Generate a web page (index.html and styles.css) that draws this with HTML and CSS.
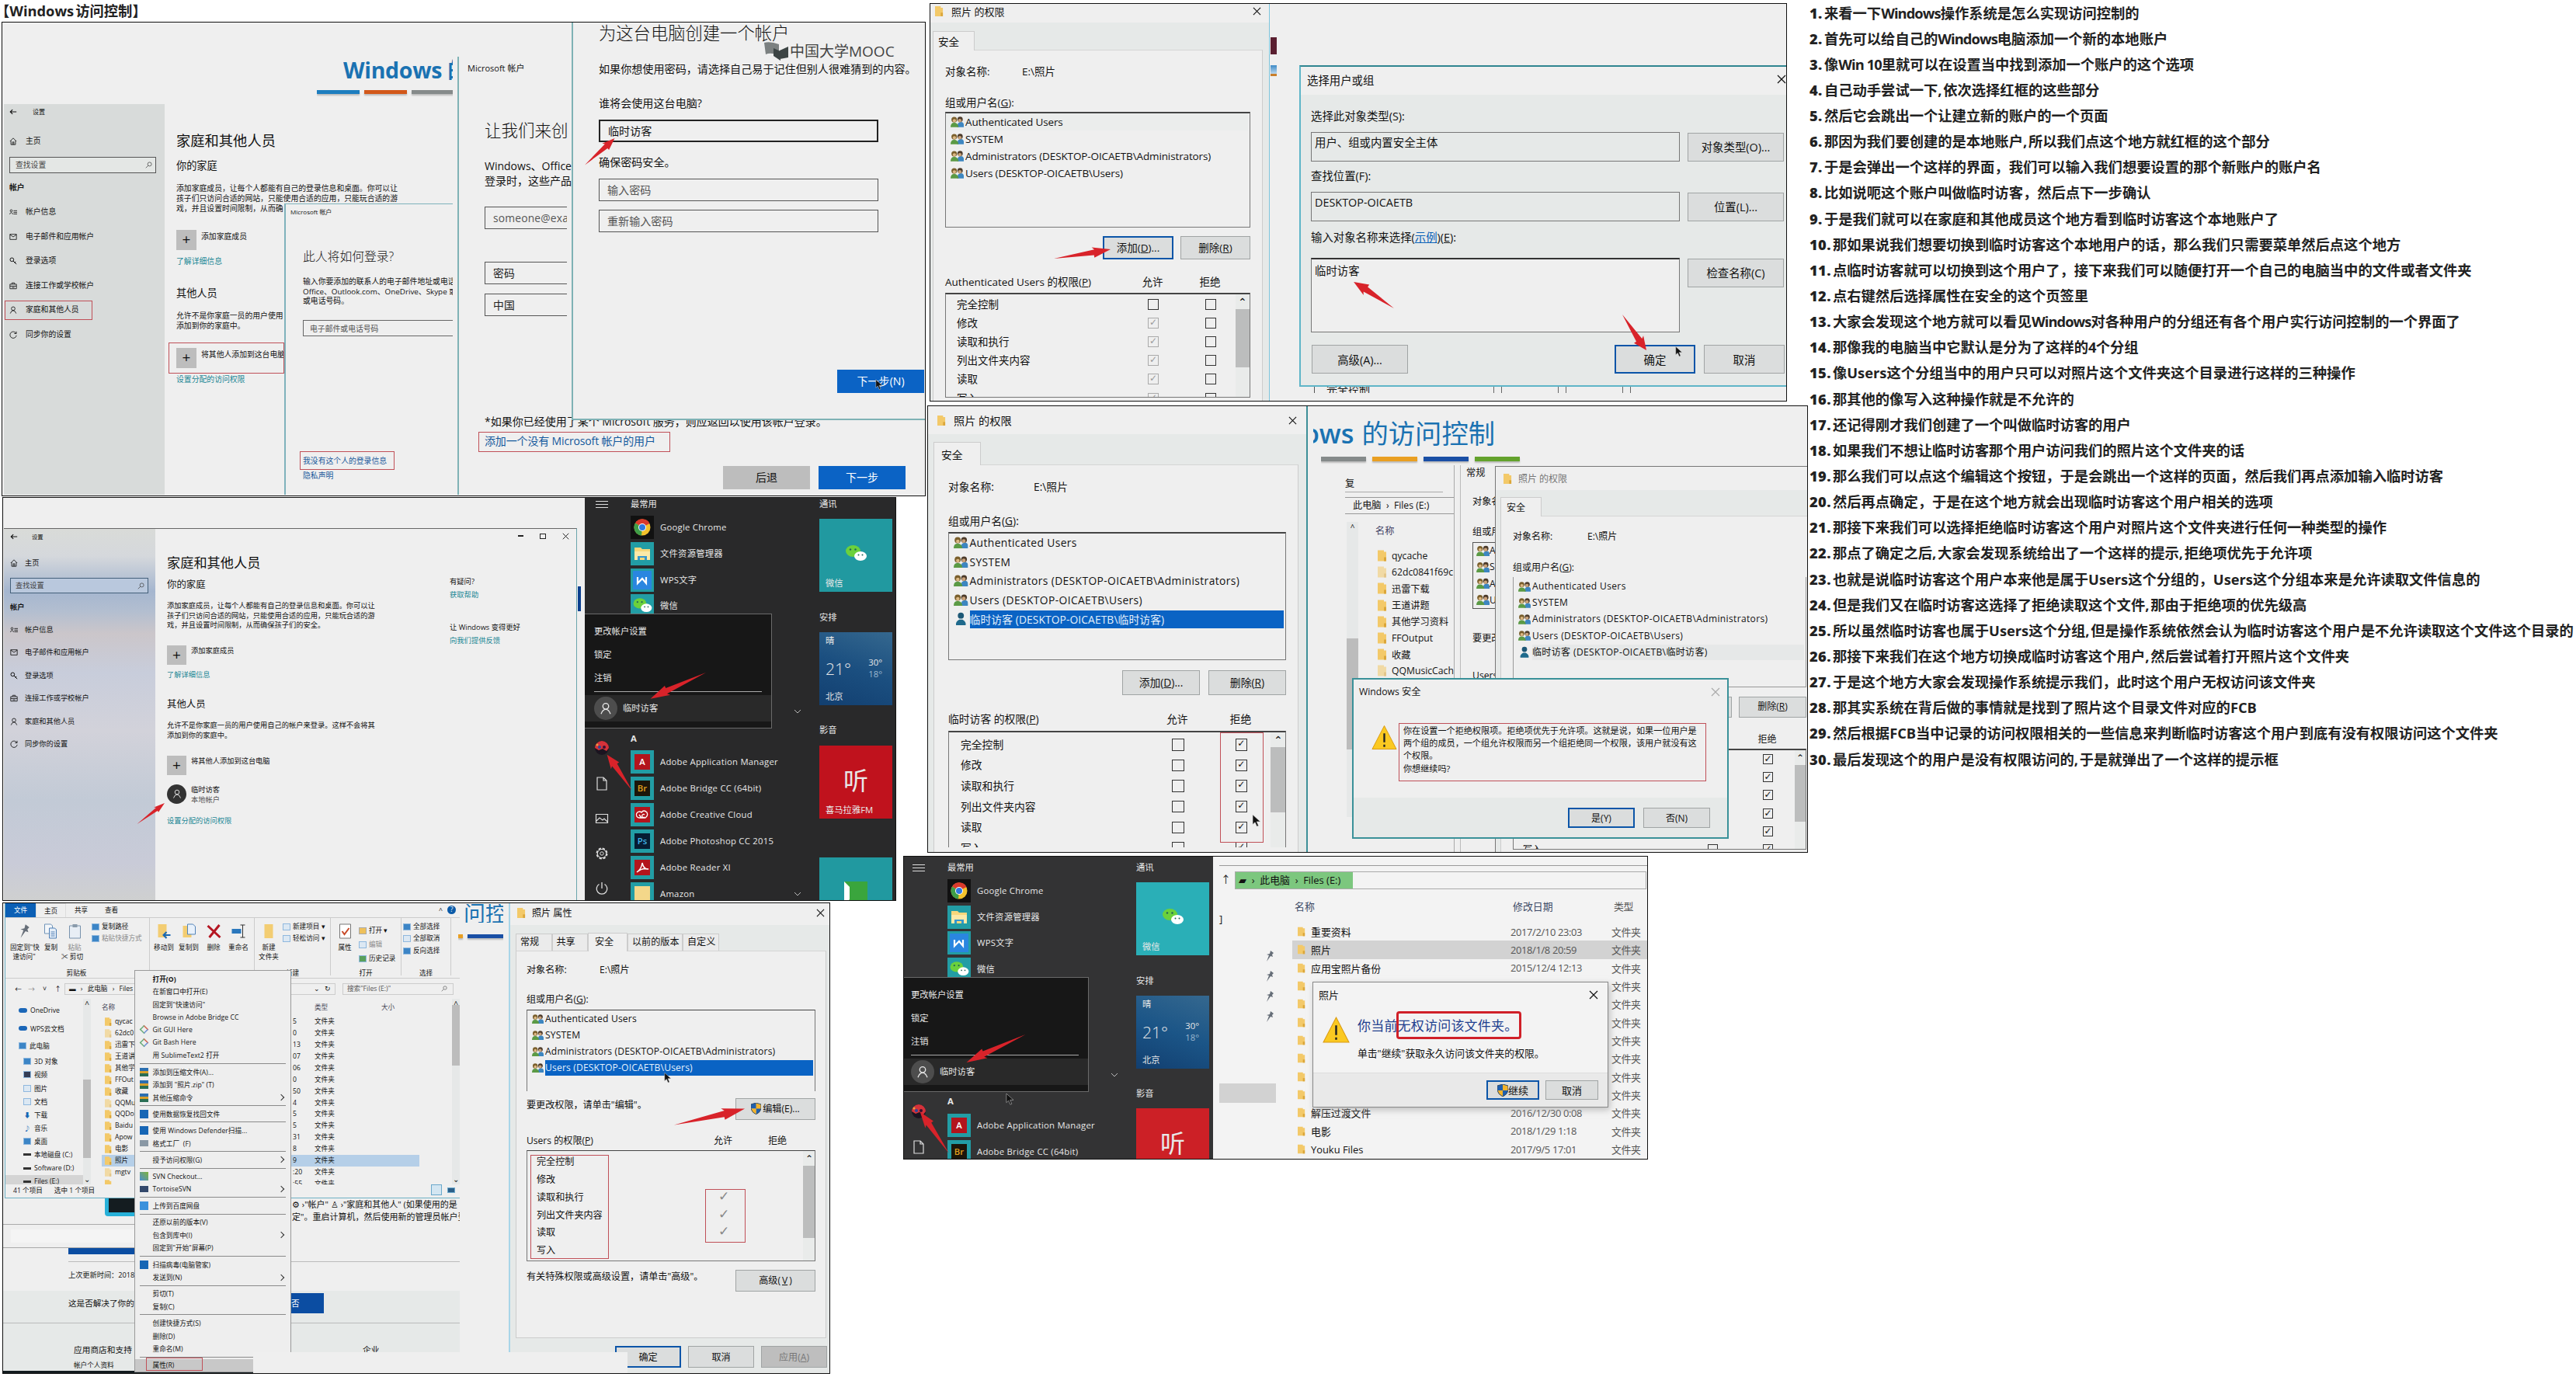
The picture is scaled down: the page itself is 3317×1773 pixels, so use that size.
FILE: index.html
```html
<!DOCTYPE html>
<html lang="zh-CN">
<head>
<meta charset="utf-8">
<title>Windows 访问控制</title>
<link rel="stylesheet" href="styles.css">
</head>
<body>
<svg width="0" height="0" class="defs">
  <symbol id="folder" viewBox="0 0 12 14"><path d="M0 0h8v2h3v12H0z" fill="#f3c969"/><path d="M8 9h3v5H8z" fill="#dba63a"/></symbol>
  <symbol id="users" viewBox="0 0 18 16"><path d="M9 15q0-7 5-7t4 7z" fill="#3d86c0"/><circle cx="13" cy="4.5" r="3.6" fill="#4b3a2a"/><circle cx="12.6" cy="6" r="2.4" fill="#c9a27a"/><path d="M0 15q0-6 5-6t6 6z" fill="#5b9a45"/><circle cx="5" cy="4.8" r="3.8" fill="#7a5f2c"/><circle cx="5.2" cy="6.2" r="2.2" fill="#dcb884"/></symbol>
  <symbol id="user" viewBox="0 0 18 16"><circle cx="9" cy="4" r="3.8" fill="#1d5876"/><path d="M3 16q-1-4 4-7h4q5 3 4 7z" fill="#1f6a8c"/></symbol>
  <symbol id="cursor" viewBox="0 0 12 18"><path d="M1 0v14l3.4-3 2.6 6 2.4-1-2.6-6H12z" fill="#111" stroke="#ddd" stroke-width=".6"/></symbol>
  <symbol id="x" viewBox="0 0 12 12"><path d="M1 1l10 10M11 1L1 11" stroke="currentColor" stroke-width="1.2"/></symbol>
  <symbol id="warn" viewBox="0 0 34 33"><path d="M17 1L33 32H1z" fill="#fbc921" stroke="#d99a12"/><path d="M17 11v12M17 26v3" stroke="#222" stroke-width="2.4"/></symbol>
  <symbol id="shield" viewBox="0 0 14 16"><path d="M7 0l7 2v6q-1 5-7 8V8H0V2z" fill="#f3b32a"/><path d="M7 0v8H0V2zM7 8h7q-1 5-7 8z" fill="#1f5fae"/><path d="M0 8h7v8Q1 13 0 8z" fill="#f3b32a"/><path d="M7 0l7 2v6q-1 5-7 8-6-3-7-8V2z" fill="none" stroke="#2c4a6c"/></symbol>
  <symbol id="home" viewBox="0 0 12 12"><path d="M1 6l5-5 5 5M2.5 5v6h7V5M5 11V7h2v4" fill="none" stroke="currentColor"/></symbol>
  <symbol id="back" viewBox="0 0 12 12"><path d="M11 6H1.5M5 2.500L1.500 6 5 9.500" fill="none" stroke="currentColor" stroke-width="1.300"/></symbol>
  <symbol id="idcard" viewBox="0 0 12 12"><circle cx="3" cy="4" r="1.600" fill="none" stroke="currentColor"/><path d="M.5 9.500Q3 4 5.500 9.500M6.500 4H12M6.500 6.500H12M6.500 9H12" fill="none" stroke="currentColor"/></symbol>
  <symbol id="mail" viewBox="0 0 12 12"><path d="M1 2h10v8H1zM1 2.500l5 3.500 5-3.500" fill="none" stroke="currentColor"/></symbol>
  <symbol id="key" viewBox="0 0 12 12"><circle cx="4" cy="4" r="2.800" fill="none" stroke="currentColor" stroke-width="1.200"/><path d="M6 6l5 5M8 8.500l2-1" fill="none" stroke="currentColor" stroke-width="1.200"/></symbol>
  <symbol id="case" viewBox="0 0 12 12"><path d="M1 3.500h10v7H1zM4 3.500v-2h4v2M1 6.500h10M4 8.500h4" fill="none" stroke="currentColor"/></symbol>
  <symbol id="person" viewBox="0 0 12 12"><circle cx="6" cy="4" r="2.800" fill="none" stroke="currentColor"/><path d="M1.500 11.500Q3 7 6 7t4.500 4.500" fill="none" stroke="currentColor"/></symbol>
  <symbol id="sync" viewBox="0 0 12 12"><path d="M10.500 4A5 5 0 1 0 11 7M10.800 1v3.200H7.600" fill="none" stroke="currentColor"/></symbol>
  <symbol id="search" viewBox="0 0 12 12"><circle cx="7.500" cy="4.500" r="3.300" fill="none" stroke="currentColor"/><path d="M5 7L1 11" stroke="currentColor"/></symbol>
  <symbol id="chrome" viewBox="0 0 30 30"><path d="M0 0h30v30H0z" fill="#111"/><circle cx="15" cy="15" r="10.500" fill="#f2c22c"/><path d="M15 15L6 9.500A10.500 10.500 0 0 1 24.500 10z" fill="#d93a2c"/><path d="M15 15L6 9.500A10.500 10.500 0 0 0 14 25.500z" fill="#3f9e48"/><circle cx="15" cy="15" r="5" fill="#fff"/><circle cx="15" cy="15" r="4" fill="#2f79e0"/></symbol>
  <symbol id="expl" viewBox="0 0 30 30"><path d="M5 7h8l2 2h10v14H5z" fill="#f6d77c"/><path d="M5 12h20v11h-4v-5H9v5H5z" fill="#fbe9a8"/><path d="M9 18h12v5h-3v-3h-6v3H9z" fill="#3597cf"/></symbol>
  <symbol id="wps" viewBox="0 0 30 30"><path d="M3 3h24v24H3z" fill="#2a86e0"/><path d="M9 11v8l6-6 5 6v-8" fill="none" stroke="#fff" stroke-width="2.200"/></symbol>
  <symbol id="wechat" viewBox="-2 -1 34 31"><ellipse cx="11.500" cy="11" rx="9.500" ry="7.500" fill="#6bd13c"/><ellipse cx="21" cy="17.500" rx="8" ry="6" fill="#fff"/><g fill="#265"><circle cx="8" cy="9" r="1.200"/><circle cx="14.500" cy="9" r="1.200"/><circle cx="18.500" cy="16" r="1"/><circle cx="23.500" cy="16" r="1"/></g></symbol>
  <symbol id="acro" viewBox="0 0 20 20"><path d="M3 16Q9 12 10 4q2 9 8 8-8-2-15 4" fill="none" stroke="#fff" stroke-width="1.500"/></symbol>
  <symbol id="cloud" viewBox="0 0 20 20"><path d="M6 14a4 4 0 1 1 3-7q3-4 7 0 2 4-2 7zM9 14l-3-4M13 10a2 2 0 1 0 0 3" fill="none" stroke="#fff" stroke-width="1.300"/></symbol>
  <symbol id="gear" viewBox="0 0 20 20"><circle cx="10" cy="10" r="6.500" fill="none" stroke="#ddd" stroke-width="2" stroke-dasharray="3.200 1.900"/><circle cx="10" cy="10" r="5.600" fill="none" stroke="#ddd"/><circle cx="10" cy="10" r="2.200" fill="none" stroke="#ddd"/></symbol>
  <symbol id="power" viewBox="0 0 20 20"><path d="M6.500 4.500a6.800 6.800 0 1 0 7 0M10 2v8" fill="none" stroke="#ddd" stroke-width="1.300"/></symbol>
  <symbol id="doc" viewBox="0 0 20 20"><path d="M4 2h8l4 4v12H4zM12 2v4h4" fill="none" stroke="#ddd" stroke-width="1.200"/></symbol>
  <symbol id="pic" viewBox="0 0 20 20"><path d="M2.500 4.500h15v11h-15zM3 13l4-4 4 3 2-2 4 4" fill="none" stroke="#ddd" stroke-width="1.200"/></symbol>
  <symbol id="burger" viewBox="0 0 20 20"><path d="M2 6.500h16M2 10.500h16M2 14.500h16" stroke="#ddd" stroke-width="1.200"/></symbol>
  <symbol id="avatar" viewBox="0 0 20 20"><circle cx="10" cy="10" r="9" fill="#1b1420"/><path d="M1 10a9 9 0 0 1 18 0l-3 4-5-3-5 2z" fill="#d4323a"/><circle cx="7" cy="9" r="2" fill="#274a9b"/><circle cx="13" cy="9" r="2" fill="#3a1030"/><circle cx="4" cy="6" r="1.500" fill="#e8a040"/></symbol>
  <symbol id="pin" viewBox="0 0 12 16"><path d="M7 1l4 3-2 2 1 3-3-1-5 7 3-8-3-1 4-1z" fill="#666e78"/></symbol>
  <symbol id="pages" viewBox="0 0 18 20"><path d="M1 1h8l2 2v10H1z" fill="#f4f7fa" stroke="#6f93b8"/><path d="M7 6h7l2 2v11H7z" fill="#e5eef8" stroke="#4f7fb5"/><path d="M9 11h5M9 13.500h5M9 16h5" stroke="#4f7fb5"/></symbol>
</svg>

<main class="board">
<h1 class="heading">【<span>Windows</span>访问控制】</h1>

<!-- Creating the account -->
<section class="shot a"></section>
<div class="slide slide-a">Windows 的</div>
<div class="bars bars-a"><i class="blue"></i><i class="rust"></i><i class="gray"></i></div>
<aside class="side side-a stack">
  <div class="nav back"><svg><use href="#back"/></svg>设置</div>
  <div class="nav"><svg><use href="#home"/></svg>主页</div>
  <div class="find">查找设置<svg><use href="#search"/></svg></div>
  <b>帐户</b>
  <div class="nav"><svg><use href="#idcard"/></svg>帐户信息</div>
  <div class="nav"><svg><use href="#mail"/></svg>电子邮件和应用帐户</div>
  <div class="nav"><svg><use href="#key"/></svg>登录选项</div>
  <div class="nav"><svg><use href="#case"/></svg>连接工作或学校帐户</div>
  <div class="nav"><svg><use href="#person"/></svg>家庭和其他人员</div>
  <div class="nav"><svg><use href="#sync"/></svg>同步你的设置</div>
</aside>
<article class="people people-a stack">
  <h2>家庭和其他人员</h2>
  <h3>你的家庭</h3>
  <p>添加家庭成员，让每个人都能有自己的登录信息和桌面。你可以让<br>孩子们只访问合适的网站，只能使用合适的应用，只能玩合适的游<br>戏，并且设置时间限制，从而确</p>
  <div class="add"><i>+</i>添加家庭成员</div>
  <a>了解详细信息</a>
  <h3>其他人员</h3>
  <p>允许不是你家庭一员的用户使用<br>添加到你的家庭中。</p>
  <div class="add"><i>+</i>将其他人添加到这台电脑</div>
  <a>设置分配的访问权限</a>
</article>
<div class="win ms1 stack">
  <small>Microsoft 帐户</small>
  <h2>此人将如何登录?</h2>
  <p>输入你要添加的联系人的电子邮件地址或电话<br>Office、Outlook.com、OneDrive、Skype 或 S<br>或电话号码。</p>
  <div class="field">电子邮件或电话号码</div>
  <a>我没有这个人的登录信息</a>
  <a>隐私声明</a>
</div>
<div class="win ms2 stack">
  <small>Microsoft 帐户</small>
  <h2>让我们来创</h2>
  <p>Windows、Office<br>登录时，这些产品</p>
  <div class="field">someone@exa</div>
  <div class="field dk">密码</div>
  <div class="field dk">中国</div>
  <p>*如果你已经使用了某个 Microsoft 服务，则应返回以使用该帐户登录。</p>
  <a>添加一个没有 Microsoft 帐户的用户</a>
  <div class="acts"><span>后退</span><span class="go">下一步</span></div>
</div>
<div class="win ms3 stack">
  <h2>为这台电脑创建一个帐户</h2>
  <p>如果你想使用密码，请选择自己易于记住但别人很难猜到的内容。</p>
  <p>谁将会使用这台电脑?</p>
  <div class="field strong">临时访客</div>
  <p>确保密码安全。</p>
  <div class="field">输入密码</div>
  <div class="field">重新输入密码</div>
  <div class="acts"><span class="go">下一步(N)</span></div>
</div>
<div class="mooc"><svg viewBox="0 0 32 24"><path d="M0 1q8-2 19 2v14Q8 13 2 16z" fill="#7b8080"/><path d="M12 8l9 4v12l-9-6zM20 11l11-5v14l-11 2z" fill="#3c4444"/></svg>中国大学MOOC</div>

<!-- Adding the user to the ACL -->
<section class="shot b"></section>
<div class="win perm pb">
  <header><svg><use href="#folder"/></svg><span>照片 的权限</span><svg class="x"><use href="#x"/></svg></header>
  <nav><b>安全</b></nav>
  <div class="page stack">
    <div class="obj"><span>对象名称:</span>E:\照片</div>
    <div>组或用户名(<u>G</u>):</div>
    <ul class="ul"><li class="soft"><svg><use href="#users"/></svg><span>Authenticated Users</span></li><li><svg><use href="#users"/></svg><span>SYSTEM</span></li><li><svg><use href="#users"/></svg><span>Administrators (DESKTOP-OICAETB\Administrators)</span></li><li><svg><use href="#users"/></svg><span>Users (DESKTOP-OICAETB\Users)</span></li></ul>
    <div class="btns"><button class="def">添加(<u>D</u>)...</button><button>删除(<u>R</u>)</button></div>
    <div class="ph"><span>Authenticated Users 的权限(<u>P</u>)</span><i>允许</i><i>拒绝</i></div>
    <ul class="pl"><li><span>完全控制</span><i></i><i></i></li><li><span>修改</span><i class="g">✓</i><i></i></li><li><span>读取和执行</span><i class="g">✓</i><i></i></li><li><span>列出文件夹内容</span><i class="g">✓</i><i></i></li><li><span>读取</span><i class="g">✓</i><i></i></li><li><span>写入</span><i class="g">✓</i><i></i></li></ul>
  </div>
</div>
<div class="sliver"></div>
<div class="under"><span>完全控制</span><i></i><i></i><i></i></div>
<div class="win pick">
  <header><span>选择用户或组</span><svg class="x"><use href="#x"/></svg></header>
  <div class="form">
    <label>选择此对象类型(S):</label>
    <div class="box">用户、组或内置安全主体</div><button>对象类型(O)...</button>
    <label>查找位置(F):</label>
    <div class="box">DESKTOP-OICAETB</div><button>位置(L)...</button>
    <label>输入对象名称来选择(<a>示例</a>)(<u>E</u>):</label>
    <div class="box area">临时访客</div><button>检查名称(C)</button>
  </div>
  <footer><button>高级(A)...</button><button class="def">确定</button><button>取消</button></footer>
</div>

<!-- The new account appears -->
<section class="shot c"></section>
<aside class="side side-c stack">
  <div class="nav back"><svg><use href="#back"/></svg>设置</div>
  <div class="nav"><svg><use href="#home"/></svg>主页</div>
  <div class="find">查找设置<svg><use href="#search"/></svg></div>
  <b>帐户</b>
  <div class="nav"><svg><use href="#idcard"/></svg>帐户信息</div>
  <div class="nav"><svg><use href="#mail"/></svg>电子邮件和应用帐户</div>
  <div class="nav"><svg><use href="#key"/></svg>登录选项</div>
  <div class="nav"><svg><use href="#case"/></svg>连接工作或学校帐户</div>
  <div class="nav"><svg><use href="#person"/></svg>家庭和其他人员</div>
  <div class="nav"><svg><use href="#sync"/></svg>同步你的设置</div>
</aside>
<article class="people people-c stack">
  <h2>家庭和其他人员</h2>
  <h3>你的家庭</h3>
  <p>添加家庭成员，让每个人都能有自己的登录信息和桌面。你可以让<br>孩子们只访问合适的网站，只能使用合适的应用，只能玩合适的游<br>戏，并且设置时间限制，从而确保孩子们的安全。</p>
  <div class="add"><i>+</i>添加家庭成员</div>
  <a>了解详细信息</a>
  <h3>其他人员</h3>
  <p>允许不是你家庭一员的用户使用自己的帐户来登录。这样不会将其<br>添加到你的家庭中。</p>
  <div class="add"><i>+</i>将其他人添加到这台电脑</div>
  <div class="add who"><i><svg><use href="#person"/></svg></i><span>临时访客<br><em>本地帐户</em></span></div>
  <a>设置分配的访问权限</a>
</article>
<div class="help stack"><span>有疑问?</span><a>获取帮助</a><span>让 Windows 变得更好</span><a>向我们提供反馈</a></div>
<div class="ctl"><i class="min"></i><i class="max"></i><svg><use href="#x"/></svg></div>
<div class="edge-c"></div>
<div class="peek-c"></div>

<div class="start sc"><div class="menu">
  <div class="rail stack"><svg><use href="#burger"/></svg><svg><use href="#avatar"/></svg><svg><use href="#doc"/></svg><svg><use href="#pic"/></svg><svg><use href="#gear"/></svg><svg><use href="#power"/></svg></div>
  <div class="apps stack"><span>最常用</span>
    <div><svg><use href="#chrome"/></svg>Google Chrome</div><div><svg><use href="#expl"/></svg>文件资源管理器</div><div><svg><use href="#wps"/></svg>WPS文字</div><div><svg><use href="#wechat"/></svg>微信</div>
    <b>A</b>
    <div><i class="red">A</i>Adobe Application Manager</div><div><i class="br">Br</i>Adobe Bridge CC (64bit)</div><div><i class="red"><svg><use href="#cloud"/></svg></i>Adobe Creative Cloud</div><div><i class="ps">Ps</i>Adobe Photoshop CC 2015</div><div><i class="red"><svg><use href="#acro"/></svg></i>Adobe Reader XI</div><div><i class="fold"></i>Amazon</div></div>
  <div class="tiles stack"><span>通讯</span><div class="t"><svg><use href="#wechat"/></svg><span>微信</span></div><span>安排</span><div class="t wx"><span>晴</span><div><big>21°</big><span>30°<br><em>18°</em></span></div><span>北京</span></div><span>影音</span><div class="t fm"><strong>听</strong><span>喜马拉雅FM</span></div><div class="t last"><i></i></div></div>
  <div class="pop"><span>更改帐户设置</span><span>锁定</span><span>注销</span><div><i><svg><use href="#person"/></svg></i>临时访客</div></div>
  <svg class="chev c1" viewBox="0 0 10 6"><path d="M1 1l4 4 4-4" fill="none" stroke="#bbb"/></svg><svg class="chev c2" viewBox="0 0 10 6"><path d="M1 1l4 4 4-4" fill="none" stroke="#bbb"/></svg>
</div></div>

<!-- Denying permissions -->
<section class="shot d"></section>
<div class="slide slide-d">Windows <span>的访问控制</span></div>
<div class="bars bars-d"><i class="gray"></i><i class="amber"></i><i class="navy"></i><i class="green"></i></div>
<div class="win ex2">
  <div class="frag">复</div>
  <div class="addr">此电脑&nbsp; › &nbsp;Files (E:)</div>
  <div class="cols"><div class="sb"><span>^</span><i></i></div>
  <ul><li class="h">名称</li><li><svg><use href="#folder"/></svg>qycache</li><li><svg class="pale"><use href="#folder"/></svg>62dc0841f69c</li><li><svg><use href="#folder"/></svg>迅雷下载</li><li><svg><use href="#folder"/></svg>王道讲题</li><li><svg><use href="#folder"/></svg>其他学习资料</li><li><svg><use href="#folder"/></svg>FFOutput</li><li><svg><use href="#folder"/></svg>收藏</li><li><svg class="pale"><use href="#folder"/></svg>QQMusicCach</li></ul></div>
</div>
<div class="win prop2 stack"><span>常规</span><span>对象名</span><span>组或用</span><ul><li><svg><use href="#users"/></svg>A</li><li><svg><use href="#users"/></svg>S</li><li><svg><use href="#users"/></svg>A</li><li><svg><use href="#users"/></svg>U</li></ul><span>要更改</span><span>Users</span></div>
<div class="win perm pd3">
  <header><svg><use href="#folder"/></svg><span>照片 的权限</span></header>
  <nav><b>安全</b></nav>
  <div class="page stack">
    <div class="obj"><span>对象名称:</span>E:\照片</div>
    <div>组或用户名(<u>G</u>):</div>
    <ul class="ul"><li><svg><use href="#users"/></svg><span>Authenticated Users</span></li><li><svg><use href="#users"/></svg><span>SYSTEM</span></li><li><svg><use href="#users"/></svg><span>Administrators (DESKTOP-OICAETB\Administrators)</span></li><li><svg><use href="#users"/></svg><span>Users (DESKTOP-OICAETB\Users)</span></li><li><svg><use href="#user"/></svg><span class="soft">临时访客 (DESKTOP-OICAETB\临时访客)</span></li></ul>
    <div class="btns"><button></button><button>删除(<u>R</u>)</button></div>
    <div class="ph"><span></span><i></i><i>拒绝</i></div>
    <ul class="pl"><li><span></span><i></i><i>✓</i></li><li><span></span><i></i><i>✓</i></li><li><span></span><i></i><i>✓</i></li><li><span></span><i></i><i>✓</i></li><li><span></span><i></i><i>✓</i></li><li><span>写入</span><i></i><i>✓</i></li></ul>
  </div>
</div>
<div class="win sec">
  <header>Windows 安全<svg class="x"><use href="#x"/></svg></header>
  <div class="msg"><svg><use href="#warn"/></svg><p>你在设置一个拒绝权限项。拒绝项优先于允许项。这就是说，如果一位用户是<br>两个组的成员，一个组允许权限而另一个组拒绝同一个权限，该用户就没有这<br>个权限。<br>你想继续吗?</p></div>
  <footer><button class="def">是(Y)</button><button>否(N)</button></footer>
</div>
<div class="win perm pd">
  <header><svg><use href="#folder"/></svg><span>照片 的权限</span><svg class="x"><use href="#x"/></svg></header>
  <nav><b>安全</b></nav>
  <div class="page stack">
    <div class="obj"><span>对象名称:</span>E:\照片</div>
    <div>组或用户名(<u>G</u>):</div>
    <ul class="ul"><li><svg><use href="#users"/></svg><span>Authenticated Users</span></li><li><svg><use href="#users"/></svg><span>SYSTEM</span></li><li><svg><use href="#users"/></svg><span>Administrators (DESKTOP-OICAETB\Administrators)</span></li><li><svg><use href="#users"/></svg><span>Users (DESKTOP-OICAETB\Users)</span></li><li><svg><use href="#user"/></svg><span class="sel">临时访客 (DESKTOP-OICAETB\临时访客)</span></li></ul>
    <div class="btns"><button>添加(<u>D</u>)...</button><button>删除(<u>R</u>)</button></div>
    <div class="ph"><span>临时访客 的权限(<u>P</u>)</span><i>允许</i><i>拒绝</i></div>
    <ul class="pl"><li><span>完全控制</span><i></i><i>✓</i></li><li><span>修改</span><i></i><i>✓</i></li><li><span>读取和执行</span><i></i><i>✓</i></li><li><span>列出文件夹内容</span><i></i><i>✓</i></li><li><span>读取</span><i></i><i>✓</i></li><li><span>写入</span><i></i><i>✓</i></li></ul>
  </div>
</div>

<!-- Folder properties -->
<section class="shot e"></section>
<div class="web">
  <div class="card"></div>
  <p class="w1">⚙ ›"帐户" ♙ ›"家庭和其他人" (如果使用的是<br>定"。重启计算机，然后使用新的管理员帐户登录</p>
  <div class="inp"></div><div class="blue"></div>
  <p class="w2">上次更新时间：2018</p>
  <div class="band"><span>这是否解决了你的</span><b>否</b></div>
  <div class="foot"><span>应用商店和支持</span><span>企业</span><small>帐户个人资料</small></div>
</div>
<div class="win ex1">
  <nav><b>文件</b><span class="on">主页</span><span>共享</span><span>查看</span><i>^</i><em>?</em></nav>
  <div class="rib">
    <div class="grp g1"><div class="big"><svg><use href="#pin"/></svg>固定到"快<br>速访问"</div><div class="big"><svg><use href="#pages"/></svg>复制</div><div class="big"><svg viewBox="0 0 18 20"><path d="M2 3h14v16H2z" fill="#e8eef5" stroke="#7892ad"/><path d="M6 1h6v4H6z" fill="#8b9bab"/></svg><span class="dim">粘贴</span><span class="cut">✂ 剪切</span></div><div class="sm"><span><i class="bl"></i>复制路径</span><span class="dim"><i></i>粘贴快捷方式</span></div><small>剪贴板</small></div>
    <div class="grp g2"><div class="big"><svg viewBox="0 0 18 20"><path d="M1 1h11v17H1z" fill="#f3cd72"/><path d="M17 15H9m3-4l-4 4 4 4" fill="none" stroke="#1667b5" stroke-width="2"/></svg>移动到</div><div class="big"><svg viewBox="0 0 18 20"><path d="M1 3h11v15H1z" fill="#f3cd72"/><path d="M7 1h7l3 3v10H7z" fill="#e8f1fb" stroke="#5384b9"/></svg>复制到</div><div class="big"><svg viewBox="0 0 18 20"><path d="M1 3l16 15M16 2L3 18" stroke="#b51622" stroke-width="3"/></svg>删除</div><div class="big"><svg viewBox="0 0 18 20"><path d="M0 7h12v6H0z" fill="#2b78bd"/><path d="M14 2v16M11 2h6M11 18h6" stroke="#333"/></svg>重命名</div></div>
    <div class="grp g3"><div class="big"><svg viewBox="0 0 18 20"><path d="M3 1h11v18H3z" fill="#f3cd72"/></svg>新建<br>文件夹</div><div class="sm"><span><i class="pg"></i>新建项目 ▾</span><span><i class="pg"></i>轻松访问 ▾</span></div><small>新建</small></div>
    <div class="grp g4"><div class="big"><svg viewBox="0 0 18 20"><path d="M2 1h14v18H2z" fill="#fff" stroke="#777"/><path d="M5 10l3 4 6-8" fill="none" stroke="#c84a28" stroke-width="2"/></svg>属性</div><div class="sm w"><span><i class="fo"></i>打开 ▾</span><span class="dim"><i class="pg"></i>编辑</span><span><i class="gr"></i>历史记录</span></div><small>打开</small></div>
    <div class="grp g5"><div class="sm"><span><i class="bl"></i>全部选择</span><span><i class="pg"></i>全部取消</span><span><i class="bl"></i>反向选择</span></div><small>选择</small></div>
  </div>
  <div class="loc"><span>←</span><span class="dim">→</span><span>˅</span><span>↑</span><div class="ad">▬ › 此电脑 › Files (E:)<em>⌄ ↻</em></div><div class="se">搜索"Files (E:)"<svg><use href="#search"/></svg></div></div>
  <div class="main">
    <ul class="tree"><li class="r"><i class="cl"></i>OneDrive</li><li class="r"><i class="cl"></i>WPS云文档</li><li class="r"><i class="bl"></i>此电脑</li><li><i class="bl"></i>3D 对象</li><li><i class="dk"></i>视频</li><li><i class="pg"></i>图片</li><li><i class="pg"></i>文档</li><li><i class="ar">⬇</i>下载</li><li><i class="ar">♪</i>音乐</li><li><i class="bl"></i>桌面</li><li><i class="dv"></i>本地磁盘 (C:)</li><li><i class="dv"></i>Software (D:)</li><li class="on"><i class="dv"></i>Files (E:)</li></ul>
    <div class="sb"><span>^</span><i></i><span>⌄</span></div>
    <ul class="files"><li class="h"><span>名称</span><span></span><span>类型</span><span>大小</span></li><li><span><svg><use href="#folder"/></svg>qycac</span><span>5</span><span>文件夹</span></li><li><span><svg class="pale"><use href="#folder"/></svg>62dc0</span><span>0</span><span>文件夹</span></li><li><span><svg><use href="#folder"/></svg>迅雷下</span><span>13</span><span>文件夹</span></li><li><span><svg><use href="#folder"/></svg>王道讲</span><span>07</span><span>文件夹</span></li><li><span><svg><use href="#folder"/></svg>其他学</span><span>06</span><span>文件夹</span></li><li><span><svg><use href="#folder"/></svg>FFOut</span><span>0</span><span>文件夹</span></li><li><span><svg><use href="#folder"/></svg>收藏</span><span>50</span><span>文件夹</span></li><li><span><svg class="pale"><use href="#folder"/></svg>QQMu</span><span>4</span><span>文件夹</span></li><li><span><svg><use href="#folder"/></svg>QQDo</span><span>5</span><span>文件夹</span></li><li><span><svg><use href="#folder"/></svg>Baidu</span><span>5</span><span>文件夹</span></li><li><span><svg><use href="#folder"/></svg>Apow</span><span>31</span><span>文件夹</span></li><li><span><svg><use href="#folder"/></svg>电影</span><span>8</span><span>文件夹</span></li><li class="on"><span><svg><use href="#folder"/></svg>照片</span><span>9</span><span>文件夹</span></li><li><span><svg class="pale"><use href="#folder"/></svg>mgtv</span><span>:20</span><span>文件夹</span></li><li><span><svg><use href="#folder"/></svg></span><span>:55</span><span>文件夹</span></li></ul>
    <div class="sb r"><span>^</span><i></i><span>⌄</span></div>
  </div>
  <div class="stat"><span>41 个项目</span><span>选中 1 个项目</span><i></i><i class="p"></i></div>
</div>
<div class="ctx">
  <span><b>打开(O)</b></span><span>在新窗口中打开(E)</span><span>固定到"快速访问"</span><span>Browse in Adobe Bridge CC</span><span><i class="git"></i>Git GUI Here</span><span><i class="git"></i>Git Bash Here</span><span>用 SublimeText2 打开</span><hr>
  <span><i class="rar"></i>添加到压缩文件(A)...</span><span><i class="rar"></i>添加到 "照片.zip" (T)</span><span class="s"><i class="rar"></i>其他压缩命令</span><hr>
  <span><i class="bb"></i>使用数据恢复找回文件</span><hr>
  <span><i class="bb"></i>使用 Windows Defender扫描...</span><span><i class="fmt"></i>格式工厂&nbsp; (F)</span><hr>
  <span class="s">授予访问权限(G)</span><hr>
  <span><i class="svn"></i>SVN Checkout...</span><span class="s"><i class="tor"></i>TortoiseSVN</span><hr>
  <span><i class="bb lt"></i>上传到百度网盘</span><hr>
  <span>还原以前的版本(V)</span><span class="s">包含到库中(I)</span><span>固定到"开始"屏幕(P)</span><hr>
  <span><i class="bb"></i>扫描病毒(电脑管家)</span><span class="s">发送到(N)</span><hr>
  <span>剪切(T)</span><span>复制(C)</span><hr>
  <span>创建快捷方式(S)</span><span>删除(D)</span><span>重命名(M)</span><hr>
  <span class="hot">属性(R)</span>
</div>
<div class="slide slide-e">问控</div>
<div class="bars bars-e"><i class="amber"></i><i class="navy"></i></div>
<div class="win perm pe">
  <header><svg><use href="#folder"/></svg><span>照片 属性</span><svg class="x"><use href="#x"/></svg></header>
  <nav><span>常规</span><span>共享</span><b>安全</b><span>以前的版本</span><span>自定义</span></nav>
  <div class="page stack">
    <div class="obj"><span>对象名称:</span>E:\照片</div>
    <div>组或用户名(<u>G</u>):</div>
    <ul class="ul"><li><svg><use href="#users"/></svg><span>Authenticated Users</span></li><li><svg><use href="#users"/></svg><span>SYSTEM</span></li><li><svg><use href="#users"/></svg><span>Administrators (DESKTOP-OICAETB\Administrators)</span></li><li><svg><use href="#users"/></svg><span class="sel">Users (DESKTOP-OICAETB\Users)</span></li></ul>
    <div class="line"><span>要更改权限，请单击"编辑"。</span><button><svg><use href="#shield"/></svg>编辑(E)...</button></div>
    <div class="ph"><span>Users 的权限(<u>P</u>)</span><i>允许</i><i>拒绝</i></div>
    <ul class="pl plain"><li><span>完全控制</span></li><li><span>修改</span></li><li><span>读取和执行</span><i>✓</i></li><li><span>列出文件夹内容</span><i>✓</i></li><li><span>读取</span><i>✓</i></li><li><span>写入</span></li></ul>
    <div class="line"><span>有关特殊权限或高级设置，请单击"高级"。</span><button>高级(<u>V</u>)</button></div>
  </div>
  <footer><button class="def">确定</button><button>取消</button><button class="off">应用(<u>A</u>)</button></footer>
</div>
<div class="patch"></div>

<!-- Access denied -->
<section class="shot f"></section>
<div class="start sf"><div class="menu">
  <div class="rail stack"><svg><use href="#burger"/></svg><svg><use href="#avatar"/></svg><svg><use href="#doc"/></svg></div>
  <div class="apps stack"><span>最常用</span>
    <div><svg><use href="#chrome"/></svg>Google Chrome</div><div><svg><use href="#expl"/></svg>文件资源管理器</div><div><svg><use href="#wps"/></svg>WPS文字</div><div><svg><use href="#wechat"/></svg>微信</div>
    <b>A</b>
    <div><i class="red">A</i>Adobe Application Manager</div><div><i class="br">Br</i>Adobe Bridge CC (64bit)</div></div>
  <div class="tiles stack"><span>通讯</span><div class="t"><svg><use href="#wechat"/></svg><span>微信</span></div><span>安排</span><div class="t wx"><span>晴</span><div><big>21°</big><span>30°<br><em>18°</em></span></div><span>北京</span></div><span>影音</span><div class="t fm"><strong>听</strong><span></span></div></div>
  <div class="pop"><span>更改帐户设置</span><span>锁定</span><span>注销</span><div><i><svg><use href="#person"/></svg></i>临时访客</div></div>
  <svg class="chev c1" viewBox="0 0 10 6"><path d="M1 1l4 4 4-4" fill="none" stroke="#bbb"/></svg>
</div></div>
<div class="win ex3">
  <div class="addr"><span>↑</span><div><b>▰ &nbsp;›&nbsp; 此电脑 &nbsp;›&nbsp; Files (E:)</b></div></div>
  <div class="cols">
    <div class="pins"><span>]</span><svg><use href="#pin"/></svg><svg><use href="#pin"/></svg><svg><use href="#pin"/></svg><svg><use href="#pin"/></svg><i></i></div>
    <ul><li class="h"><span>名称</span><span>修改日期</span><span>类型</span></li>
    <li><svg><use href="#folder"/></svg><span>重要资料</span><span>2017/2/10 23:03</span><span>文件夹</span></li><li class="on"><svg><use href="#folder"/></svg><span>照片</span><span>2018/1/8 20:59</span><span>文件夹</span></li><li><svg><use href="#folder"/></svg><span>应用宝照片备份</span><span>2015/12/4 12:13</span><span>文件夹</span></li>
    <li><svg><use href="#folder"/></svg><span></span><span></span><span>文件夹</span></li><li><svg><use href="#folder"/></svg><span></span><span></span><span>文件夹</span></li><li><svg><use href="#folder"/></svg><span></span><span></span><span>文件夹</span></li><li><svg><use href="#folder"/></svg><span></span><span></span><span>文件夹</span></li><li><svg><use href="#folder"/></svg><span></span><span></span><span>文件夹</span></li><li><svg><use href="#folder"/></svg><span></span><span></span><span>文件夹</span></li><li><svg><use href="#folder"/></svg><span></span><span></span><span>文件夹</span></li>
    <li><svg><use href="#folder"/></svg><span>解压过渡文件</span><span>2016/12/30 0:08</span><span>文件夹</span></li><li><svg><use href="#folder"/></svg><span>电影</span><span>2018/1/29 1:18</span><span>文件夹</span></li><li><svg><use href="#folder"/></svg><span>Youku Files</span><span>2017/9/5 17:01</span><span>文件夹</span></li></ul>
  </div>
</div>
<div class="win deny">
  <header>照片<svg class="x"><use href="#x"/></svg></header>
  <div class="msg"><svg><use href="#warn"/></svg><div><h4>你当前无权访问该文件夹。</h4><p>单击"继续"获取永久访问该文件夹的权限。</p></div></div>
  <footer><button class="def"><svg><use href="#shield"/></svg>继续</button><button>取消</button></footer>
</div>

<!-- Hand-drawn marks over the captures -->
<i class="mark m1"></i><i class="mark m2"></i><i class="mark m3"></i><i class="mark m4"></i><i class="mark m5"></i><i class="mark m6"></i><i class="mark m7"></i><i class="mark m8"></i><i class="mark m9"></i><i class="mark m10"></i>
<svg class="ink" viewBox="0 0 3317 1773">
  <defs><path id="ar" d="M0 0L72-4 68-8 100 0 70 9 70 5z"/></defs>
  <g fill="#d8232a">
  <use href="#ar" transform="translate(753 212.500) rotate(-41.900) scale(.517 .7)"/>
  <use href="#ar" transform="translate(1357 333) rotate(-9.300) scale(.74 .8)"/>
  <use href="#ar" transform="translate(1795 397) rotate(213.200) scale(.62 .9)"/>
  <use href="#ar" transform="translate(2089 405) rotate(56) scale(.555 .9)"/>
  <use href="#ar" transform="translate(176.500 1061) rotate(-37.300) scale(.446 .5)"/>
  <use href="#ar" transform="translate(909 866) rotate(154.700) scale(.79 .8)"/>
  <use href="#ar" transform="translate(814 1018) rotate(235.100) scale(.565 .8)"/>
  <use href="#ar" transform="translate(1320.500 1332) rotate(154.700) scale(.84 .8)"/>
  <use href="#ar" transform="translate(1222 1485) rotate(235.100) scale(.65 .8)"/>
  <use href="#ar" transform="translate(868 1448.400) rotate(-12.900) scale(.934 .9)"/>
  </g>
  <use href="#cursor" x="1127" y="488" width="9" height="15"/><use href="#cursor" x="2157" y="445" width="9" height="16"/><use href="#cursor" x="1612" y="1049" width="11" height="16"/><use href="#cursor" x="855" y="1381" width="9" height="14"/><use href="#cursor" x="1295" y="1408" width="10" height="15"/>
</svg>

<ol class="notes">
<li><b>1.</b>来看一下<em>Windows</em>操作系统是怎么实现访问控制的</li>
<li><b>2.</b>首先可以给自己的<em>Windows</em>电脑添加一个新的本地账户</li>
<li><b>3.</b>像<em>Win 10</em>里就可以在设置当中找到添加一个账户的这个选项</li>
<li><b>4.</b>自己动手尝试一下<i>,</i>依次选择红框的这些部分</li>
<li><b>5.</b>然后它会跳出一个让建立新的账户的一个页面</li>
<li><b>6.</b>那因为我们要创建的是本地账户<i>,</i>所以我们点这个地方就红框的这个部分</li>
<li><b>7.</b>于是会弹出一个这样的界面，我们可以输入我们想要设置的那个新账户的账户名</li>
<li><b>8.</b>比如说呃这个账户叫做临时访客，然后点下一步确认</li>
<li><b>9.</b>于是我们就可以在家庭和其他成员这个地方看到临时访客这个本地账户了</li>
<li><b>10.</b>那如果说我们想要切换到临时访客这个本地用户的话，那么我们只需要菜单然后点这个地方</li>
<li><b>11.</b>点临时访客就可以切换到这个用户了，接下来我们可以随便打开一个自己的电脑当中的文件或者文件夹</li>
<li><b>12.</b>点右键然后选择属性在安全的这个页签里</li>
<li><b>13.</b>大家会发现这个地方就可以看见<em>Windows</em>对各种用户的分组还有各个用户实行访问控制的一个界面了</li>
<li><b>14.</b>那像我的电脑当中它默认是分为了这样的<em>4</em>个分组</li>
<li><b>15.</b>像<em class="n">Users</em>这个分组当中的用户只可以对照片这个文件夹这个目录进行这样的三种操作</li>
<li><b>16.</b>那其他的像写入这种操作就是不允许的</li>
<li><b>17.</b>还记得刚才我们创建了一个叫做临时访客的用户</li>
<li><b>18.</b>如果我们不想让临时访客那个用户访问我们的照片这个文件夹的话</li>
<li><b>19.</b>那么我们可以点这个编辑这个按钮，于是会跳出一个这样的页面，然后我们再点添加输入临时访客</li>
<li><b>20.</b>然后再点确定，于是在这个地方就会出现临时访客这个用户相关的选项</li>
<li><b>21.</b>那接下来我们可以选择拒绝临时访客这个用户对照片这个文件夹进行任何一种类型的操作</li>
<li><b>22.</b>那点了确定之后<i>,</i>大家会发现系统给出了一个这样的提示<i>,</i>拒绝项优先于允许项</li>
<li><b>23.</b>也就是说临时访客这个用户本来他是属于<em class="n">Users</em>这个分组的，<em class="n">Users</em>这个分组本来是允许读取文件信息的</li>
<li><b>24.</b>但是我们又在临时访客这选择了拒绝读取这个文件<i>,</i>那由于拒绝项的优先级高</li>
<li><b>25.</b>所以虽然临时访客也属于<em class="n">Users</em>这个分组<i>,</i>但是操作系统依然会认为临时访客这个用户是不允许读取这个文件这个目录的</li>
<li><b>26.</b>那接下来我们在这个地方切换成临时访客这个用户<i>,</i>然后尝试着打开照片这个文件夹</li>
<li><b>27.</b>于是这个地方大家会发现操作系统提示我们，此时这个用户无权访问该文件夹</li>
<li><b>28.</b>那其实系统在背后做的事情就是找到了照片这个目录文件对应的<em class="n">FCB</em></li>
<li><b>29.</b>然后根据<em class="n">FCB</em>当中记录的访问权限相关的一些信息来判断临时访客这个用户到底有没有权限访问这个文件夹</li>
<li><b>30.</b>最后发现这个的用户是没有权限访问的<i>,</i>于是就弹出了一个这样的提示框</li>
</ol>
</main>
</body>
</html>
```
FILE: styles.css
```css
*{box-sizing:border-box}
body{margin:0;background:#fff;color:#111;font-family:"Open Sans","Noto Sans CJK SC",sans-serif}
.board{position:relative;width:3317px;height:1773px;overflow:hidden}
h1,h2,h3,h4,p,ul,ol{margin:0;padding:0;font-weight:400;list-style:none}
i,em{font-style:normal}
svg{display:block;flex:none}
.defs{position:absolute}
a{text-decoration:none}
button{font:inherit;color:inherit;padding:0;border:1px solid #a0a4a4;background:#dbdddd;display:flex;align-items:center;justify-content:center;white-space:nowrap;flex:none}
button.def{border:2px solid #0b55a8}
.heading{position:absolute;left:-6px;top:2px;font-size:18.300px;line-height:24px;font-weight:700;white-space:nowrap;color:#222}
.heading span{display:inline-block;width:85px}
.shot{position:absolute;border:1px solid #111;background:#efefef}
.a{left:2px;top:28px;width:1190px;height:611px}
.b{left:1197px;top:4px;width:1104px;height:513px}
.c{left:3px;top:640px;width:1151px;height:520px}
.d{left:1194px;top:522px;width:1134px;height:576px}
.e{left:3px;top:1162px;width:1066px;height:607px}
.f{left:1163px;top:1102px;width:959px;height:391px;background:#f3f3f3}
.win,.side,.people,.help,.start,.ctx,.web,.slide,.bars{position:absolute;overflow:hidden;white-space:nowrap}
.stack{display:grid;align-content:start;justify-items:start;align-items:start;line-height:20px}

.slide{color:#1a72b2;font-weight:700;line-height:40px}
.slide-a{left:442px;top:70px;width:141px;font-size:28.500px;letter-spacing:-.3px}
.slide-d{left:1691px;top:538px;width:240px;font-size:34.300px;font-weight:600;display:flex;justify-content:flex-end;padding-right:6px}
.slide-d span{font-weight:400;margin-left:10px}
.slide-e{left:597px;top:1164px;width:51px;font-size:28px;line-height:24px;font-weight:400}
.bars{display:flex;gap:6px}
.bars i{height:5px;width:55px;box-shadow:0 2px 2px #bbb;flex:none}
.bars-a{left:408px;top:116px;width:175px;height:9px}
.bars-d{left:1701px;top:588px;width:260px;height:10px;gap:8px}
.bars-d i{width:58px;height:6px}
.bars-e{left:590px;top:1203px;width:58px;height:9px}
.bars-e i:first-child{width:6px}
.blue{background:#1d7dbf}.rust{background:#d2581a}.gray{background:#858a8a}.amber{background:#e99f22}.navy{background:#1a4fa5}.green{background:#63a22c}

.side{font-size:9.800px;background:#d8dbda;padding-left:7px}
.side-a{left:5px;top:134px;width:207px;height:503px;grid-template-rows:38px 30px 30px 31px 31.600px 31.600px 31.600px 31.600px 31.600px 20px}
.side-c{left:5px;top:681px;width:195px;height:478px;font-size:9.200px;padding-left:8px;grid-template-rows:34px 29px 28px 28.500px 29.600px 29.600px 29.600px 29.600px 29.600px 20px;background:linear-gradient(#d9dbd8 0,#d5d8dc 35px,#a5b6cf 80px,#b2bed0 105px,#cbc6ca 135px,#c8cddb 185px,#d2d2da 260px,#c2cad6 350px,#c9cbd8 430px,#cfd0d0)}
.nav{display:flex;align-items:center;gap:11px}
.nav svg{width:10px;height:10px}
.side-c .nav{gap:9px}
.nav.back{gap:20px;font-size:8px}
.side-c .nav.back{font-size:7.300px;gap:18px}
.find{display:flex;justify-content:space-between;align-items:center;width:189px;height:21px;border:1.500px solid #555;background:#e4e7e5;padding:0 4px 0 7px;color:#444}
.find svg{width:9px;height:9px}
.side-c .find{width:178px;height:20px;border-color:#44607a;background:#b9c8dd;padding-left:6px}
.people h2{font-size:18.300px}
.people h3{font-size:13.200px}
.people{font-size:9.840px}
.people p{line-height:13.200px}
.people-a{left:227px;top:171px;width:290px;grid-template-rows:31.500px 33px 60.500px 30px 41px 33px 47.500px 30.500px 20px}
.people-c{left:215px;top:715px;width:300px;font-size:9.240px;grid-template-rows:28.400px 31px 57px 27.600px 38.400px 31px 45px 36.600px 37px 20px}
.people-c h2{font-size:17.200px}.people-c h3{font-size:12.400px}.people-c p{line-height:12.300px}
.people a,.help a{color:#1c8795}
.add{display:flex;gap:6px;line-height:16px}
.add>i{width:26px;height:26px;background:#bdbdbd;font-size:19px;line-height:24px;text-align:center;flex:none}
.people-c .add>i{width:25px;height:25px}
.people-c .add{line-height:13px}
.people-c .who>i{border-radius:50%;background:#333;color:#ddd;display:grid;place-items:center;line-height:0}
.who svg{width:12px;height:12px}
.who em{color:#555}
.help{left:579px;top:739px;font-size:9.300px;grid-template-rows:17px 42px 17px 20px;width:160px}
.ctl{position:absolute;left:667px;top:685px;width:66px;display:flex;justify-content:space-between;align-items:center;height:10px}
.ctl .min{width:7px;height:2px;background:#222}.ctl .max{width:8px;height:7px;border:1.500px solid #222}.ctl svg{width:9px;height:9px}
.edge-c{position:absolute;left:5px;top:680px;width:738px;height:479px;border-top:1px solid #666;border-right:1px solid #6aa5ad}
.peek-c{position:absolute;left:744px;top:755px;width:4px;height:32px;background:#0a3f8f}

.ms1{left:366px;top:262px;width:217px;height:375px;background:#efefef;border:1px solid #7fb2bc;border-width:1px 0 0 2px;font-size:9.840px;padding-left:22px;grid-template-rows:57px 36px 56px 171px 19px 20px}
.ms1 small{font-size:8px;margin-left:-16px}
.ms1 h2{font-size:15.800px;font-weight:300}
.ms1 p{line-height:12.700px}
.ms1 a{color:#1a5a9c}
.field{width:500px;height:21px;border:1px solid #666;padding-left:8px;display:flex;align-items:center;color:#555}
.ms2{left:589px;top:73px;width:602px;height:564px;background:#efefef;border-left:2px solid #7fb2b5;font-size:14px;padding-left:33px;grid-template-rows:80px 46px 62px 71px 41px 154.500px 25.500px 42px 30px;padding-top:5px}
.ms2 small{font-size:11px;margin-left:-22px}
.ms2 h2{font-size:21.500px;font-weight:300}
.ms2 p{line-height:19px}
.ms2 .field{height:29px;width:106px;border-right:0;border-color:#555;padding-left:10px;overflow:hidden;font-size:13.800px;letter-spacing:.2px}
.ms2 .dk{color:#222}
.ms2>a{color:#13589c;letter-spacing:-.15px}
.acts{display:flex;gap:11px;line-height:29px}
.ms2 .acts{margin-left:307px}
.acts span{width:112px;height:30px;background:#bdbdbd;text-align:center}
.acts .go{background:#0b63c5;color:#fff}
.ms3{left:736px;top:29px;width:455px;height:512px;background:#efefef;border:solid #7fb2b5;border-width:0 0 2px 2px;font-size:14.100px;padding:4px 0 0 33px;grid-template-rows:46px 44px 31px 45px 31px 40px 206px 30px}
.ms3 h2{font-size:22.300px;font-weight:300}
.ms3 .field{width:360px;height:29px;border:1.500px solid #555;padding-left:10px}
.ms3 .strong{border:2px solid #222;color:#111}
.ms3 .acts{margin-left:307px}
.mooc{position:absolute;left:984px;top:54px;display:flex;gap:1px;font-size:19px;line-height:24px;color:#444}
.mooc svg{width:32px;height:24px}

.perm{--fs:13.500px;font-size:var(--fs);background:#e6e9e8}
.perm header{display:flex;align-items:center;background:#efefef}
.perm header svg{width:11px;height:13px}
.perm header span{flex:1}
.perm nav{display:flex;align-items:flex-end}
.perm nav b{font-weight:400;background:#efefef;border:1px solid #ccc;border-bottom:0;display:flex;align-items:center}
.perm .page{background:#efefef;border:1px solid #ccc;border-top-color:#d5d5d5;height:600px}
.obj{display:flex}
.ul,.pl{border:1px solid #777;border-top:2px solid #444;background:#efefef;overflow:hidden}
.ul{width:100%;letter-spacing:var(--ls)}
.ul li{display:flex;align-items:center;height:var(--uh);padding-left:6px;gap:2px}
.ul svg{width:var(--ui);height:calc(var(--ui)*.95)}
.ul li.soft{background:#ebedec}
.ul .sel,.ul .soft{flex:1;margin-right:2px}
.ul .sel{background:#0a63c4;color:#e4f0fb;line-height:calc(var(--uh) - 1px)}
.ul span.soft{background:#e6e8e8}
.btns{display:flex;gap:9px;justify-self:end}
.ph,.pl li{display:grid;grid-template-columns:var(--c1) var(--cw) var(--cw);justify-items:center;align-items:center}
.ph{height:20px}
.ph>span,.pl span{justify-self:start;white-space:nowrap}
.pl{width:100%;position:relative}
.pl li{height:var(--ph)}
.pl li i{width:14px;height:14px;border:1.500px solid #333;font-size:12px;line-height:11px;text-align:center;font-family:"DejaVu Sans"}
.pl li i.g{border-color:#aaa;color:#999}
.pl::before{content:"⌃";position:absolute;right:0;top:0;width:var(--sw);height:100%;background:#e9ebea;text-align:center}
.pl::after{content:"";position:absolute;right:0;top:19px;width:var(--sw);height:var(--th);background:#bcbdbd}
.pl span{padding-left:var(--in)}
.pl.plain li i{border:0;color:#888;font-size:17px}

.pb{left:1198px;top:5px;width:437px;height:511px;border-right:1px solid #7cc4dc;--ls:-.12px;--uh:22px;--ui:17px;--c1:230px;--cw:74px;--ph:24.200px;--sw:18px;--th:75px;--in:14px}
.pb header{height:24px;padding:0 10px 6px 6px;gap:10px}
.pb header span{font-size:13px}
.pb nav{height:36px;padding-left:3px;margin-bottom:-1px}
.pb nav b{width:54px;height:25px;padding-left:6px}
.pb .page{width:425px;margin-left:3px;padding:17px 15px 0 15px;grid-template-rows:40px 22px 160px 49px 23.500px 135px}
.pb .obj span{width:99px}
.pb .ul{height:149px}.pb .pl{height:135px;padding-top:1px}
.pb .btns button{width:91px;height:30px}
.pb .btns button:last-child{width:90px}
.sliver{position:absolute;left:1636px;top:30px;width:8px;height:88px;background:linear-gradient(#efefef 18px,#5a1f30 18px,#5a1f30 40px,#efefef 40px,#efefef 54px,#3e8ac6 54px,#bcd8ee 65px,#c87f2c 65px,#c87f2c 68px,#efefef 68px)}
.under{position:absolute;left:1692px;top:498px;width:480px;height:8px;overflow:hidden;display:flex;font-size:14px;line-height:5px;padding-left:15px;border-left:1px solid #555}
.under span{width:282px}
.under i{border:solid #666;border-width:0 1px;width:14px;margin-right:72px}
.pick{left:1673px;top:84px;width:627px;height:414px;background:#e6e9e8;border:solid #5fb5c8;border-width:2px 0 2px 2px;border-top-color:#2f8590;font-size:14.400px}
.pick header{height:36px;background:#efefef;display:flex;justify-content:space-between;align-items:center;padding:0 0 4px 8px}
.pick header svg{width:12px;height:12px}
.form{display:grid;grid-template-columns:475px 124px;column-gap:10px;grid-template-rows:32px 45px 32px 47px 38px 96px;padding:16px 0 0 13px;line-height:24px;align-items:start}
.form label{grid-column:1/3}
.form a{color:#0b62b8;text-decoration:underline}
.box{height:38px;border:1px solid #777;padding:1px 4px}
.box.area{height:96px;background:#efefef;border-top:2px solid #333;padding-top:3px}
.form button{height:37px;margin-top:1px}
.pick footer{display:flex;padding:16px 0 0 14px;gap:11px}
.pick footer button{width:104px;height:37px}
.pick footer button:first-child{width:124px;margin-right:255px}

.start{background:#29292a;color:#e8e8e8;font-size:11.300px}
.sc{left:753px;top:641px;width:400px;height:518px}
.sf{left:1164px;top:1103px;width:398px;height:389px;background:#333334}
.sf .menu{margin-left:-3px;margin-top:5.500px}
.menu{position:relative;width:400px;height:518px;display:flex}
.rail{width:59px;padding-left:12px;grid-template-rows:314px 46px 45px 44.500px 45.500px 20px;margin-top:-2px}
.rail svg{width:20px;height:20px}
.apps{width:243px;margin-top:-2px;grid-template-rows:25.400px 33.700px 33.700px 33.700px 175.500px 25.300px 33.900px 33.900px 33.900px 33.900px 33.900px 34px}
.apps div{display:flex;align-items:center;gap:8px;line-height:30px;letter-spacing:.25px}
.apps svg{width:30px;height:30px;background:#229da5}
.apps i{width:30px;height:30px;border:5px solid #229da5;text-align:center;line-height:20px;font-weight:600;letter-spacing:0}
.apps i svg{width:20px;height:20px;background:none}
.red{background:#b3141c;color:#fff}.br{background:#1c160a;color:#e0a11e}.ps{background:#061c33;color:#42b4e8}.fold{background:#f3d78a}
.tiles{margin-top:-2px;grid-template-rows:29px 117px 29px 116px 29.500px 144.500px 60px}
.t{width:94px;height:94px;background:#2199a0;padding:0 8px;display:flex;flex-direction:column;justify-content:space-between;line-height:22px}
.t svg{width:34px;height:32px;margin:29px auto 0}
.t.wx{background:linear-gradient(20deg,#123f70,#1b4f80 50%,#35688f)}
.wx div{display:flex;justify-content:space-between;line-height:15px;padding-right:5px}
.wx big{font-size:21px;font-weight:300;line-height:32px}.wx em{color:#9bb8d0}
.t.fm{background:#c0121d}.fm strong{font-size:32px;font-weight:400;text-align:center;margin-top:34px}
.t.last i{width:30px;height:30px;background:#3aa53d;border:7px solid #3aa53d;border-left-color:#fff;margin:31px auto 0}
.sf .t{background:#2aafb7}.sf .t.wx{background:linear-gradient(20deg,#123f70,#1b5587 50%,#35688f)}.sf .t.fm{background:#cc2026}
.pop{position:absolute;left:-1px;top:149px;width:242px;height:148px;background:#171717;border:1px solid #6a6a6a;display:flex;flex-direction:column;line-height:30px;padding:7px 0 0;overflow:hidden}
.pop>span{padding-left:12px}
.pop>div{display:flex;align-items:center;gap:7px;background:#292929;height:34px;padding-left:12px;margin-top:7px;position:relative}
.pop>div::before{content:"";position:absolute;left:12px;right:12px;top:-5px;height:1px;background:#aaa}
.pop i{width:30px;height:30px;border-radius:50%;background:#4d4d4d;display:grid;place-items:center}
.pop svg{width:16px;height:16px}
.chev{position:absolute;left:269px;width:10px;height:6px}.c1{top:272px}.c2{top:507px}

.pd{left:1195px;top:523px;width:489px;height:574px;border-right:2px solid #3d8f98;--fs:13.800px;--ls:.4px;--uh:24.500px;--ui:18.500px;--c1:254px;--cw:81.600px;--ph:26.600px;--sw:19px;--th:84px;--in:15px}
.pd header{height:36px;padding:0 12px 0 12px;gap:10px;font-size:14.200px}
.pd nav{height:40px;padding-left:7px;margin-bottom:-1px}
.pd nav b{width:61px;height:30px;padding-left:9px}
.pd .page{width:470px;margin-left:7px;padding:18px 15px 0 18px;grid-template-rows:44px 24px 177.600px 53.400px 24.600px 150px}
.pd .obj span{width:110px}
.pd .sel{letter-spacing:.1px}
.pd .ul{height:165px}.pd .pl{height:150px;padding-top:3px;border-bottom:0}
.pd .btns{gap:11px}.pd .btns button{width:100px;height:32px}
.pd .pl i{width:15.500px;height:15.500px}
.pd3{left:1925px;top:600px;width:402px;height:497px;border:solid #777;border-width:1px 0 0 1px;--fs:12px;--ls:.37px;--uh:21.200px;--ui:16px;--c1:221px;--cw:71px;--ph:23.300px;--sw:14px;--th:73px;--in:12px}
.pd3 header{height:30px;padding-left:10px;gap:8px;color:#777}
.pd3 nav{height:34px;padding-left:6px;margin-bottom:-1px}
.pd3 nav b{width:53px;height:25px;padding-left:7px}
.pd3 .page{width:400px;margin-left:6px;padding:16px 5px 0 15px;grid-template-rows:39.500px 22px 154px 45px 22px 129px}
.pd3 .obj span{width:96px}
.pd3 .ul{height:142px;border-top:0;border-color:#999;padding-top:2px}.pd3 .pl{height:130px}
.pd3 .btns button{width:87px;height:27px}
.pd3 .pl i{width:13px;height:13px;line-height:10px}
.ex2{left:1732px;top:599px;width:141px;height:498px;background:#efefef;border-right:1px solid #aaa;font-size:12.200px}
.frag{height:35px;line-height:48px;border-bottom:1px solid #aaa;margin-bottom:6px;margin-right:14px;overflow:hidden}
.addr{height:22px;line-height:20px;border:1px solid #999;border-width:1px 0;padding-left:10px}
.cols{display:flex}
.sb{display:flex;flex-direction:column;align-items:center;font-size:10px;background:#e6e8e8}
.ex2 .sb{width:15px;margin:10px 0 0 2px;height:380px}
.sb i{width:100%;background:#bcbcbc}
.ex2 .sb i{margin-top:136px;height:143px}
.ex2 li{display:flex;align-items:center;gap:6px;height:21.200px}
.ex2 ul{padding:12px 0 0 25px}
.ex2 li.h{height:31px;margin-left:-3px;align-items:start;color:#446}
.ex2 li svg,.files svg{width:12px;height:15px}
.pale{opacity:.55}
.prop2{left:1880px;top:599px;width:46px;height:498px;background:#efefef;border-left:1px solid #bbb;font-size:12.200px;padding-left:15px;grid-template-rows:37px 38.600px 23px 114px 48.500px 20px}
.prop2>span:first-child{margin-left:-8px}
.prop2 ul{border:1px solid #555;height:86px;width:60px;padding:0 4px}
.prop2 li{display:flex;height:21.200px;align-items:center}
.prop2 svg{width:17px;height:15px}
.sec{left:1741px;top:873px;width:485px;height:207px;background:#efefef;border:2px solid #3a9199}
.sec header{display:flex;justify-content:space-between;padding:0 9px 0 7px;font-size:12.200px;line-height:32px;height:58px}
.sec header svg{width:12px;height:12px;margin-top:10px;color:#aaa}
.sec .msg{display:flex;gap:8px;padding-left:23px;height:94px}
.sec .msg svg{width:33px;height:33px}
.sec p{font-size:11.120px;line-height:16.200px}
.sec footer{background:#e6e9e8;height:60px;display:flex;gap:11px;padding:13px 0 0 276px;font-size:12px}
.sec footer button{width:86px;height:26px}

.ex1{left:6px;top:1163px;width:586px;height:380px;background:#efefef;font-size:8.600px;border-bottom:1px solid #6fb1c4;border-left:1px solid #6fb1c4}
.ex1 nav{display:flex;height:18px;line-height:18px}
.ex1 nav>*{width:39px;text-align:center}
.ex1 nav b{background:#0b5fb5;color:#fff;font-weight:400}
.ex1 nav .on{border:1px solid #ddd;border-bottom:0}
.ex1 nav i{margin-left:385px}
.ex1 nav em{width:11px;height:11px;line-height:11px;margin:3px 0 0 -11px;border-radius:50%;background:#0a5aa8;color:#fff}
.rib{display:flex;height:79px;border:solid #ccc;border-width:1px 0}
.grp{display:flex;position:relative;border-right:1px solid #ccc;padding-top:7px;height:74px;line-height:12px}
.grp small{position:absolute;left:0;right:0;bottom:-3px;text-align:center;font-size:8.600px}
.big{width:36px;text-align:center}
.big svg{width:19px;height:20px;margin:0 auto 5px}
.big span{display:block}
.sm{display:flex;flex-direction:column;line-height:15.300px}
.sm span{display:flex;align-items:center;gap:3px}
.sm.w{line-height:18px}
.dim{color:#8a8a8a}
.ex1 i.bl,.ex1 i.pg,.ex1 i.fo,.ex1 i.gr,.ex1 i.dk,.ex1 i.dv,.sm i{display:inline-block;width:10px;height:9px;background:#3c85c6;border:1px solid #8fb8de;flex:none}
.ex1 i.pg{background:#dce8f3}.ex1 i.fo{background:#eec05a;border-color:#aaa}.ex1 i.gr{background:#59a05b}.ex1 i.dk{background:#333c55}.ex1 i.dv{height:3px;background:#333;border:0}
.g1{width:186px;padding-left:6px}.g2{width:135px;padding-left:2px}.g2 .big{width:32px}.g3{width:98px}.g4{width:91px}.g5{width:64px;padding-left:2px}
.g1 small{right:2px;left:0}
.g1 .big:nth-child(2){width:33px}.g1 .big:nth-child(3){width:28px}.g1 .sm{margin-left:8px}.g1 .sm,.g2 .sm,.g3 .sm,.g5 .sm{margin-top:-3px}
.cut{white-space:nowrap;margin-left:-6px}
.loc{display:flex;align-items:center;height:26px;padding-left:8px}
.loc>span{width:17px;text-align:center}
.ad,.se{border:1px solid #ccc;height:15px;line-height:13px;display:flex;justify-content:space-between;padding:0 5px}
.ad{width:349px;word-spacing:4px}.se{width:143px;margin-left:9px;color:#555}.se svg{width:8px;height:8px;margin:2px}
.main{display:flex;height:239px;overflow:hidden}
.tree{width:100px;padding-top:4px}
.tree li{display:flex;align-items:center;gap:4px;height:17.200px;padding-left:23px}
.tree li.r{padding-left:17px;height:22.700px}
.tree li.on{background:#d4d4d4}
.tree i.cl{width:11px;height:6px;border-radius:6px;background:#1b67b8}
.tree i.ar{color:#1667b5;width:10px;text-align:center}
.sb.r{margin-left:auto}
.main .sb{width:10px;flex:none}
.main .sb i{margin-top:90px;height:101px}
.main .sb.r i{margin-top:-6px;height:78px}
.main .sb span:last-child{margin-top:auto}
.files{width:452px;padding:1px 0 0 14px}
.files li{display:grid;grid-template-columns:246px 28px 86px 60px;height:14.950px;align-items:center;line-height:15px;overflow:hidden;width:409px}
.files li.h{height:21px;color:#445}
.files span{display:flex;align-items:center;gap:4px;overflow:hidden}
.files svg{width:9px;height:13px;margin-left:4px}
.files li.on{background:#b5cfe8}
.stat{display:flex;gap:15px;padding-left:10px;line-height:17px}
.stat i{width:14px;height:14px;border:1px solid #6aa8cc;background:#d3e6f2;margin-left:auto}
.stat .p{margin:4px 6px 0 -8px;width:10px;height:7px;background:#2b5f88}
.web{left:4px;top:1543px;width:588px;height:225px;background:#efefef}
.card{position:absolute;left:131px;top:-10px;width:60px;height:33px;border-radius:4px;background:#141c20;border:5px solid #27b0d8}
.w1{position:absolute;left:372px;top:0;font-size:11px;line-height:15.500px}
.inp{margin:33px 0 0;height:31px;border:solid #aaa;border-width:1px 0;padding:6px 10px;width:200px;background:content-box linear-gradient(#f4f4f4,#f4f4f4)}
.web .blue{margin-left:84px;width:120px;height:8px;background:#0b4da2}
.w2{margin:9px 0 0 84px;border-top:1px solid #bbb;line-height:34px;height:38px;font-size:9.200px}
.band{background:#e6e9e8;height:42px;border:solid #bbb;border-width:0 0 1px;padding:3px 0 0 84px;font-size:10.600px;line-height:26px;display:flex;align-items:start}
.band span{width:240px}
.band b{margin-left:43px;width:46px;background:#0b4da2;color:#fff;font-weight:400;padding-left:4px}
.foot{background:#e6e9e8;border-bottom:4px solid #141c20;height:65px;padding:24px 0 0 91px;display:grid;grid-template-columns:372px 1fr;font-size:10.700px;line-height:20px;align-content:start}
.foot small{font-size:8.600px}
.ctx{left:173px;top:1249px;width:202px;height:518px;background:#eee;border:1.500px solid #999;padding-top:2px;font-size:8.600px;letter-spacing:.08px;z-index:1}
.ctx span{display:flex;align-items:center;height:16.450px;padding-left:22.500px;position:relative}
.ctx hr{height:1px;margin:1.900px 6px 2px;border:0;background:#8a8a8a}
.ctx span i{width:11px;height:11px;margin-left:-17px;margin-right:6px;background:#1766b5;flex:none}
.ctx .s::after{content:"";position:absolute;right:9px;width:5px;height:5px;border:solid #333;border-width:1px 1px 0 0;transform:rotate(45deg)}
.ctx span i.git{background:none;border:2px solid #6aab78;border-color:#d0614c #6b8fd2 #6aab78 #6aab78;transform:rotate(45deg) scale(.75)}
.ctx span i.rar{background:linear-gradient(#2c6fb0 40%,#d9a02a 40%,#d9a02a 60%,#2a6f55 60%)}
.ctx span i.lt{background:#3b91dc}.ctx span i.fmt{background:#8a98a5;height:8px}.ctx span i.svn{background:linear-gradient(45deg,#4d8ed0,#7db23a)}.ctx span i.tor{background:#33486b;height:8px}
.ctx .hot{background:#c8c8c8}

.pe{left:655px;top:1163px;width:413px;height:605px;border-left:2px solid #a8d5e8;--fs:12.100px;--ls:.17px;--uh:20.900px;--ui:15px;--c1:218px;--cw:70px;--ph:22.900px;--sw:15px;--th:93px;--in:12px}
.pe header{height:28px;padding:0 6px 4px 9px;gap:8px}
.pe nav{height:33px;padding-left:7px}
.pe nav span{border:1px solid #ccc;border-bottom:0;height:22px;width:46.500px;padding-left:5px;line-height:19px;background:#ebebeb}
.pe nav b{width:51px;height:24px;padding-left:8px;margin-bottom:-1px;padding-bottom:3px}
.pe nav span:nth-child(4){width:71px}
.pe .page{width:400px;height:499px;margin-left:7px;padding:14px 13px 0 13px;grid-template-rows:38px 22.600px 114.400px 45px 22.500px 153.500px 30px}
.pe .obj span{width:94px}
.pe .ul{height:105px;border-bottom:0;border-top-width:1px;padding-top:1px}.pe .pl{height:143px;padding-top:2px;border-top-width:1px}
.line{display:flex;justify-content:space-between;width:100%;line-height:17px}
.line button{width:103px;height:28px;gap:2px}
.line svg{width:13px;height:15px}
.pe footer{display:flex;gap:9px;padding:10px 0 0 135px}
.pe footer button{width:85px;height:28px}
.pe .off{background:#bebebe;color:#777}
.patch{position:absolute;z-index:2;left:326px;top:1741px;width:482px;height:27px;background:#efefef}

.ex3{left:1562px;top:1103px;width:559px;height:389px;background:#f3f3f3;font-size:12.900px}
.ex3 .addr{display:flex;border:0;border-top:1px solid #999;margin:11px 0 0 8px;height:31px;padding:7px 0 0 2px;line-height:21px}
.ex3 .addr div{margin-left:8px;width:530px;height:23px;border:1px solid #aaa}
.ex3 .addr span{width:10px}
.ex3 .addr b{display:block;background:#7cc77e;font-weight:400;width:151px;padding-left:4px}
.pins{width:102px;display:grid;grid-template-rows:50px 26px 26px 26px 78px 26px;align-content:start;padding:28px 0 0 8px;line-height:20px}
.pins svg{width:12px;height:16px;margin-left:59px}
.pins i{width:73px;height:25px;background:#d2d2d2;margin-top:16px}
.ex3 li{display:grid;grid-template-columns:10px 250px 123px 60px;column-gap:7px;height:23.340px;align-items:center;padding-left:7px;width:457px}
.ex3 li svg{width:10px;height:13px}
.ex3 li span:nth-child(n+3){color:#555;letter-spacing:-.35px}
.ex3 li.h{grid-template-columns:274px 123px 60px;padding-left:3px;height:43px;color:#3c4a66}
.ex3 li.on{background:#d2d2d2}
.deny{left:1690px;top:1264px;width:381px;height:162px;background:#f3f3f3;border:1px solid #888;box-shadow:2px 3px 8px #9999;font-size:13px}
.deny header{display:flex;justify-content:space-between;padding:0 12px 0 7px;line-height:32px;height:41px}
.deny header svg{width:12px;height:12px;margin-top:10px}
.deny .msg{display:flex;gap:10px;padding:3px 0 0 12px;height:75px}
.deny .msg svg{width:35px;height:34px}
.deny h4{font-size:17px;color:#1f3f8f;line-height:24px;letter-spacing:.2px}
.deny p{font-size:12.800px;line-height:20px;margin-top:13px}
.deny footer{background:#e9e9e9;border-top:1px solid #ddd;display:flex;gap:8px;padding:9px 0 0 223px;height:46px}
.deny footer button{width:68px;height:25px}
.deny footer svg{width:14px;height:16px}

.mark{position:absolute;border:1.500px solid #c05058;z-index:3}
.m1{left:6px;top:387px;width:113px;height:25px}
.m2{left:217px;top:441px;width:149px;height:40px}
.m3{left:386px;top:581px;width:122px;height:24px}
.m4{left:616px;top:556px;width:247px;height:26px}
.m5{left:1571px;top:943px;width:56px;height:142px}
.m6{left:1801px;top:931px;width:396px;height:75px}
.m7{left:683px;top:1487px;width:101px;height:134px}
.m8{left:908px;top:1531px;width:52px;height:69px}
.m9{left:188px;top:1748px;width:73px;height:17px}
.m10{left:1798px;top:1302px;width:161px;height:36px;border:3px solid #d02028;border-radius:4px}
.ink{position:absolute;left:0;top:0;width:3317px;height:1773px;z-index:4;pointer-events:none}

.notes{position:absolute;left:2330px;top:-.5px;font-size:18.300px;font-weight:700;color:#222;white-space:nowrap}
.notes li{height:33.150px;line-height:33.150px}
.notes b{display:inline-block;width:19px;letter-spacing:.4px}
.notes li:nth-child(n+10) b{width:30px}
.notes em{letter-spacing:-.9px}
.notes em.n{letter-spacing:0}
.notes i{display:inline-block;width:7px}
```
